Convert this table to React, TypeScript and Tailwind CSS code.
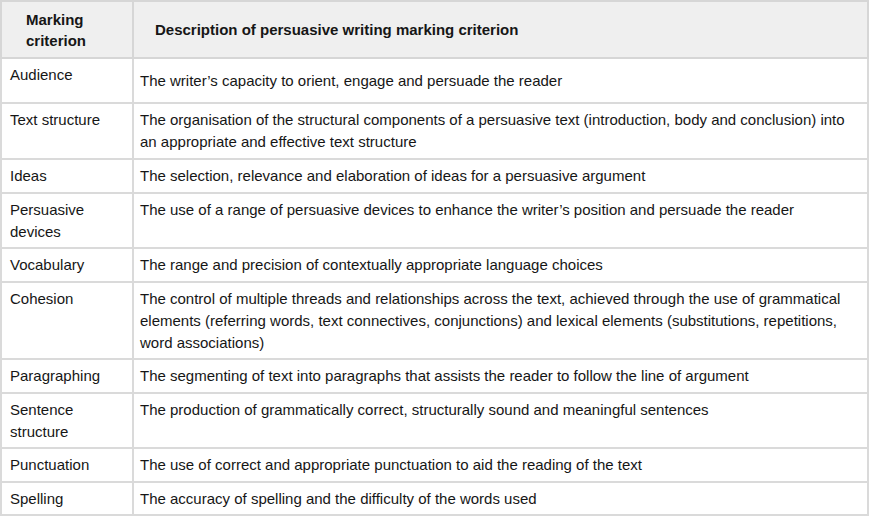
const rows: { name: string; desc: string; h: string; descPad?: string }[] = [
  {
    name: "Audience",
    desc: "The writer’s capacity to orient, engage and persuade the reader",
    h: "h-[45px]",
    descPad: "pt-[11px]",
  },
  {
    name: "Text structure",
    desc: "The organisation of the structural components of a persuasive text (introduction, body and conclusion) into an appropriate and effective text structure",
    h: "h-[56px]",
  },
  {
    name: "Ideas",
    desc: "The selection, relevance and elaboration of ideas for a persuasive argument",
    h: "h-[34px]",
  },
  {
    name: "Persuasive devices",
    desc: "The use of a range of persuasive devices to enhance the writer’s position and persuade the reader",
    h: "h-[55px]",
  },
  {
    name: "Vocabulary",
    desc: "The range and precision of contextually appropriate language choices",
    h: "h-[34px]",
  },
  {
    name: "Cohesion",
    desc: "The control of multiple threads and relationships across the text, achieved through the use of grammatical elements (referring words, text connectives, conjunctions) and lexical elements (substitutions, repetitions, word associations)",
    h: "h-[77px]",
  },
  {
    name: "Paragraphing",
    desc: "The segmenting of text into paragraphs that assists the reader to follow the line of argument",
    h: "h-[34px]",
  },
  {
    name: "Sentence structure",
    desc: "The production of grammatically correct, structurally sound and meaningful sentences",
    h: "h-[55px]",
  },
  {
    name: "Punctuation",
    desc: "The use of correct and appropriate punctuation to aid the reading of the text",
    h: "h-[34px]",
  },
  {
    name: "Spelling",
    desc: "The accuracy of spelling and the difficulty of the words used",
    h: "h-[33px]",
  },
];

export default function App() {
  return (
    <div className="w-[870px] h-[517px] bg-white font-['Liberation_Sans',Arial,sans-serif] text-[15px] text-[#161616]">
      <table className="w-[869px] table-fixed border-collapse">
        <colgroup>
          <col className="w-[132px]" />
          <col />
        </colgroup>
        <thead>
          <tr className="h-[57px] bg-[#efefef]">
            <th className="border-2 border-[#d6d6d6] pl-6 pr-2 text-left align-middle font-bold leading-[21px]">
              Marking
              <br />
              criterion
            </th>
            <th className="border-2 border-[#d6d6d6] pl-[21px] text-left align-middle font-bold leading-[21px]">
              Description of persuasive writing marking criterion
            </th>
          </tr>
        </thead>
        <tbody>
          {rows.map((row) => (
            <tr key={row.name} className={row.h}>
              <td className="border-2 border-[#dadada] px-2 pt-[5px] align-top leading-[22px]">
                {row.name}
              </td>
              <td
                className={`border-2 border-[#dadada] pl-[6px] pr-3 align-top leading-[22px] ${
                  row.descPad ?? "pt-[5px]"
                }`}
              >
                {row.desc}
              </td>
            </tr>
          ))}
        </tbody>
      </table>
    </div>
  );
}
